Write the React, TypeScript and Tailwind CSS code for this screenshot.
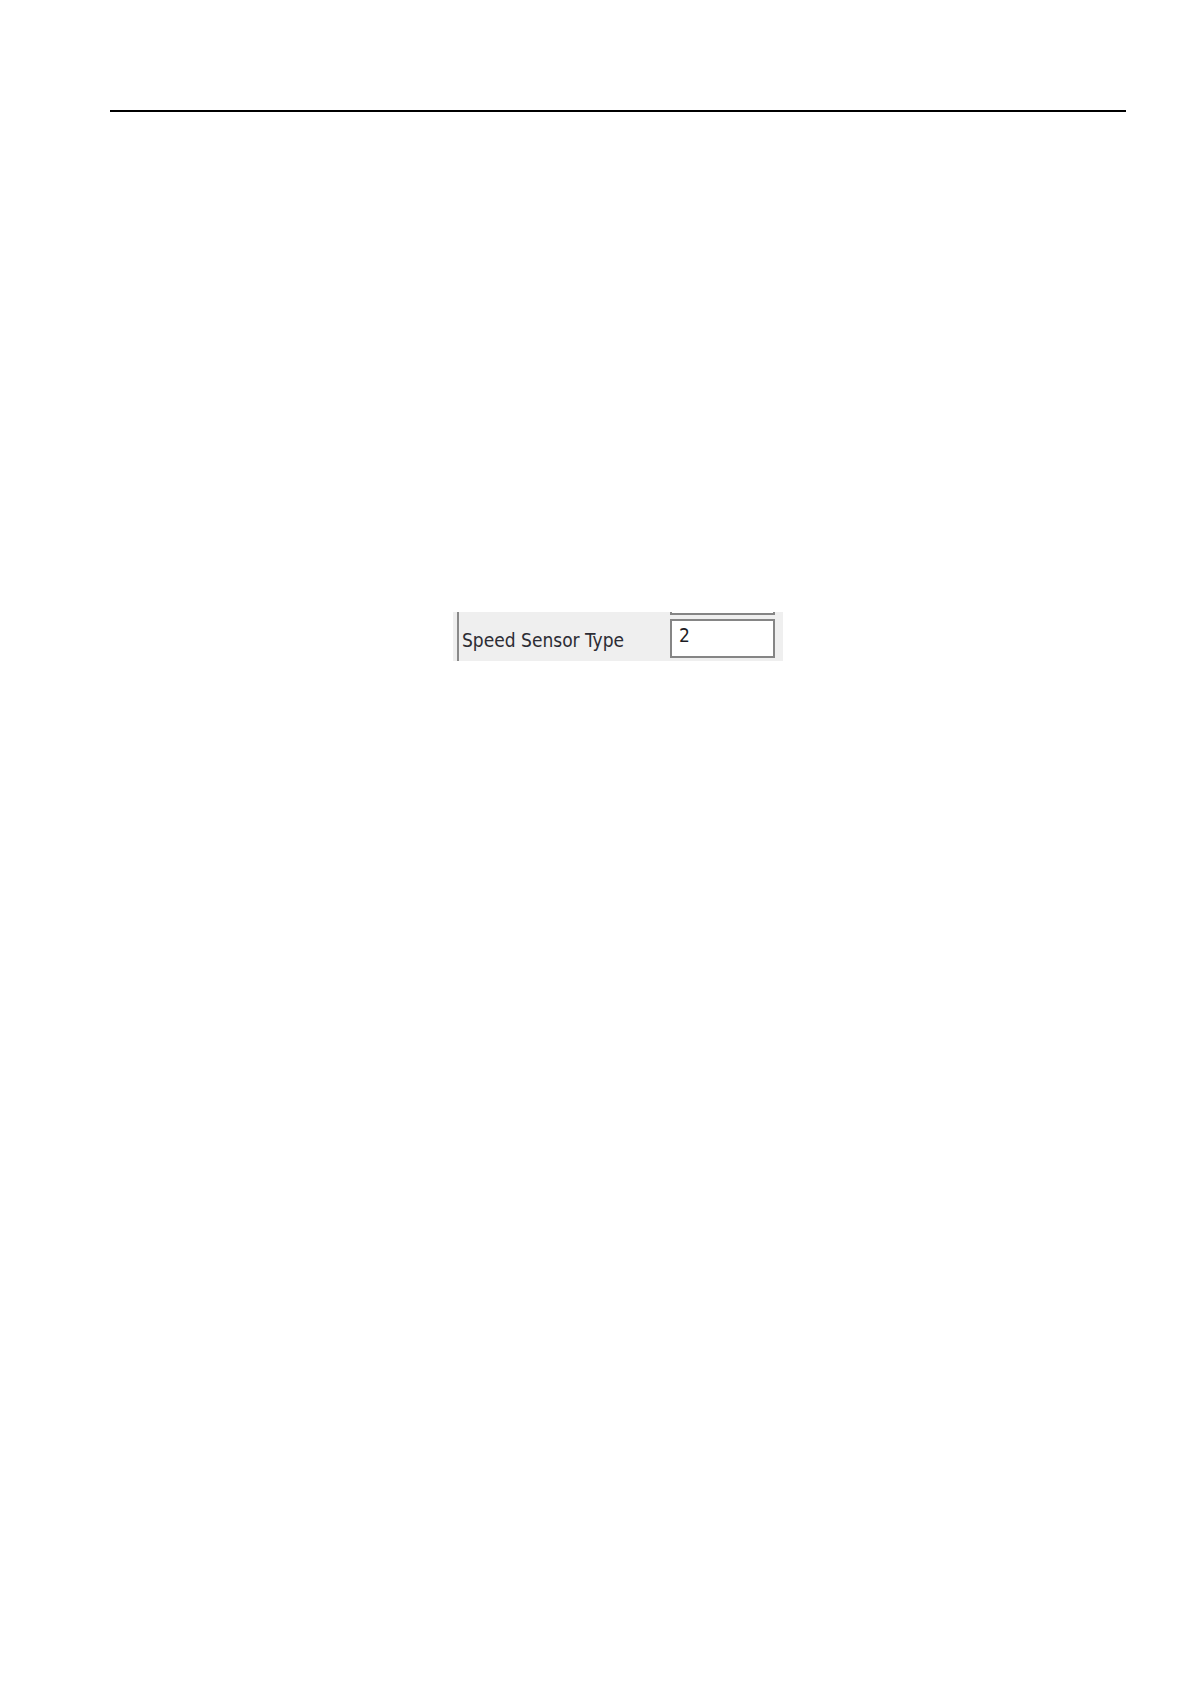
interface ParameterRowProps {
  id: string;
  label: string;
  value: string;
}

function ParameterRow({ id, label, value }: ParameterRowProps) {
  return (
    <div className="flex pl-[3px]">
      <label htmlFor={id} className="w-[208px] pt-[9px] text-[19px] leading-6 text-[#2c2c34] whitespace-nowrap">
        {label}
      </label>
      <input
        id={id}
        type="text"
        defaultValue={value}
        className="w-[105px] h-[39px] border-2 border-[#858585] bg-white pl-[7px] pb-[7px] text-[19px] leading-6 text-[#1c1c24] outline-none"
      />
    </div>
  );
}

export default function App() {
  return (
    <div className="min-h-screen bg-white pt-[110px] font-['DejaVu_Sans_Condensed','Noto_Sans',sans-serif]">
      {/* Page header rule */}
      <hr className="ml-[110px] mr-[65px] h-[2px] border-0 bg-black" />

      <main className="mt-[500px] flex justify-center pl-[45px]">
        {/* Settings panel, scrolled so that only the last row is in view */}
        <section className="w-[330px] bg-[#efefef] pl-1">
          <div className="border-l-2 border-[#8a8a8a] pb-[3px]">
            <div className="mb-1 ml-[211px] h-[3px] w-[105px] border-x-2 border-b-2 border-[#858585] bg-white" />
            <ParameterRow id="speed-sensor-type" label="Speed Sensor Type" value="2" />
          </div>
        </section>
      </main>
    </div>
  );
}
